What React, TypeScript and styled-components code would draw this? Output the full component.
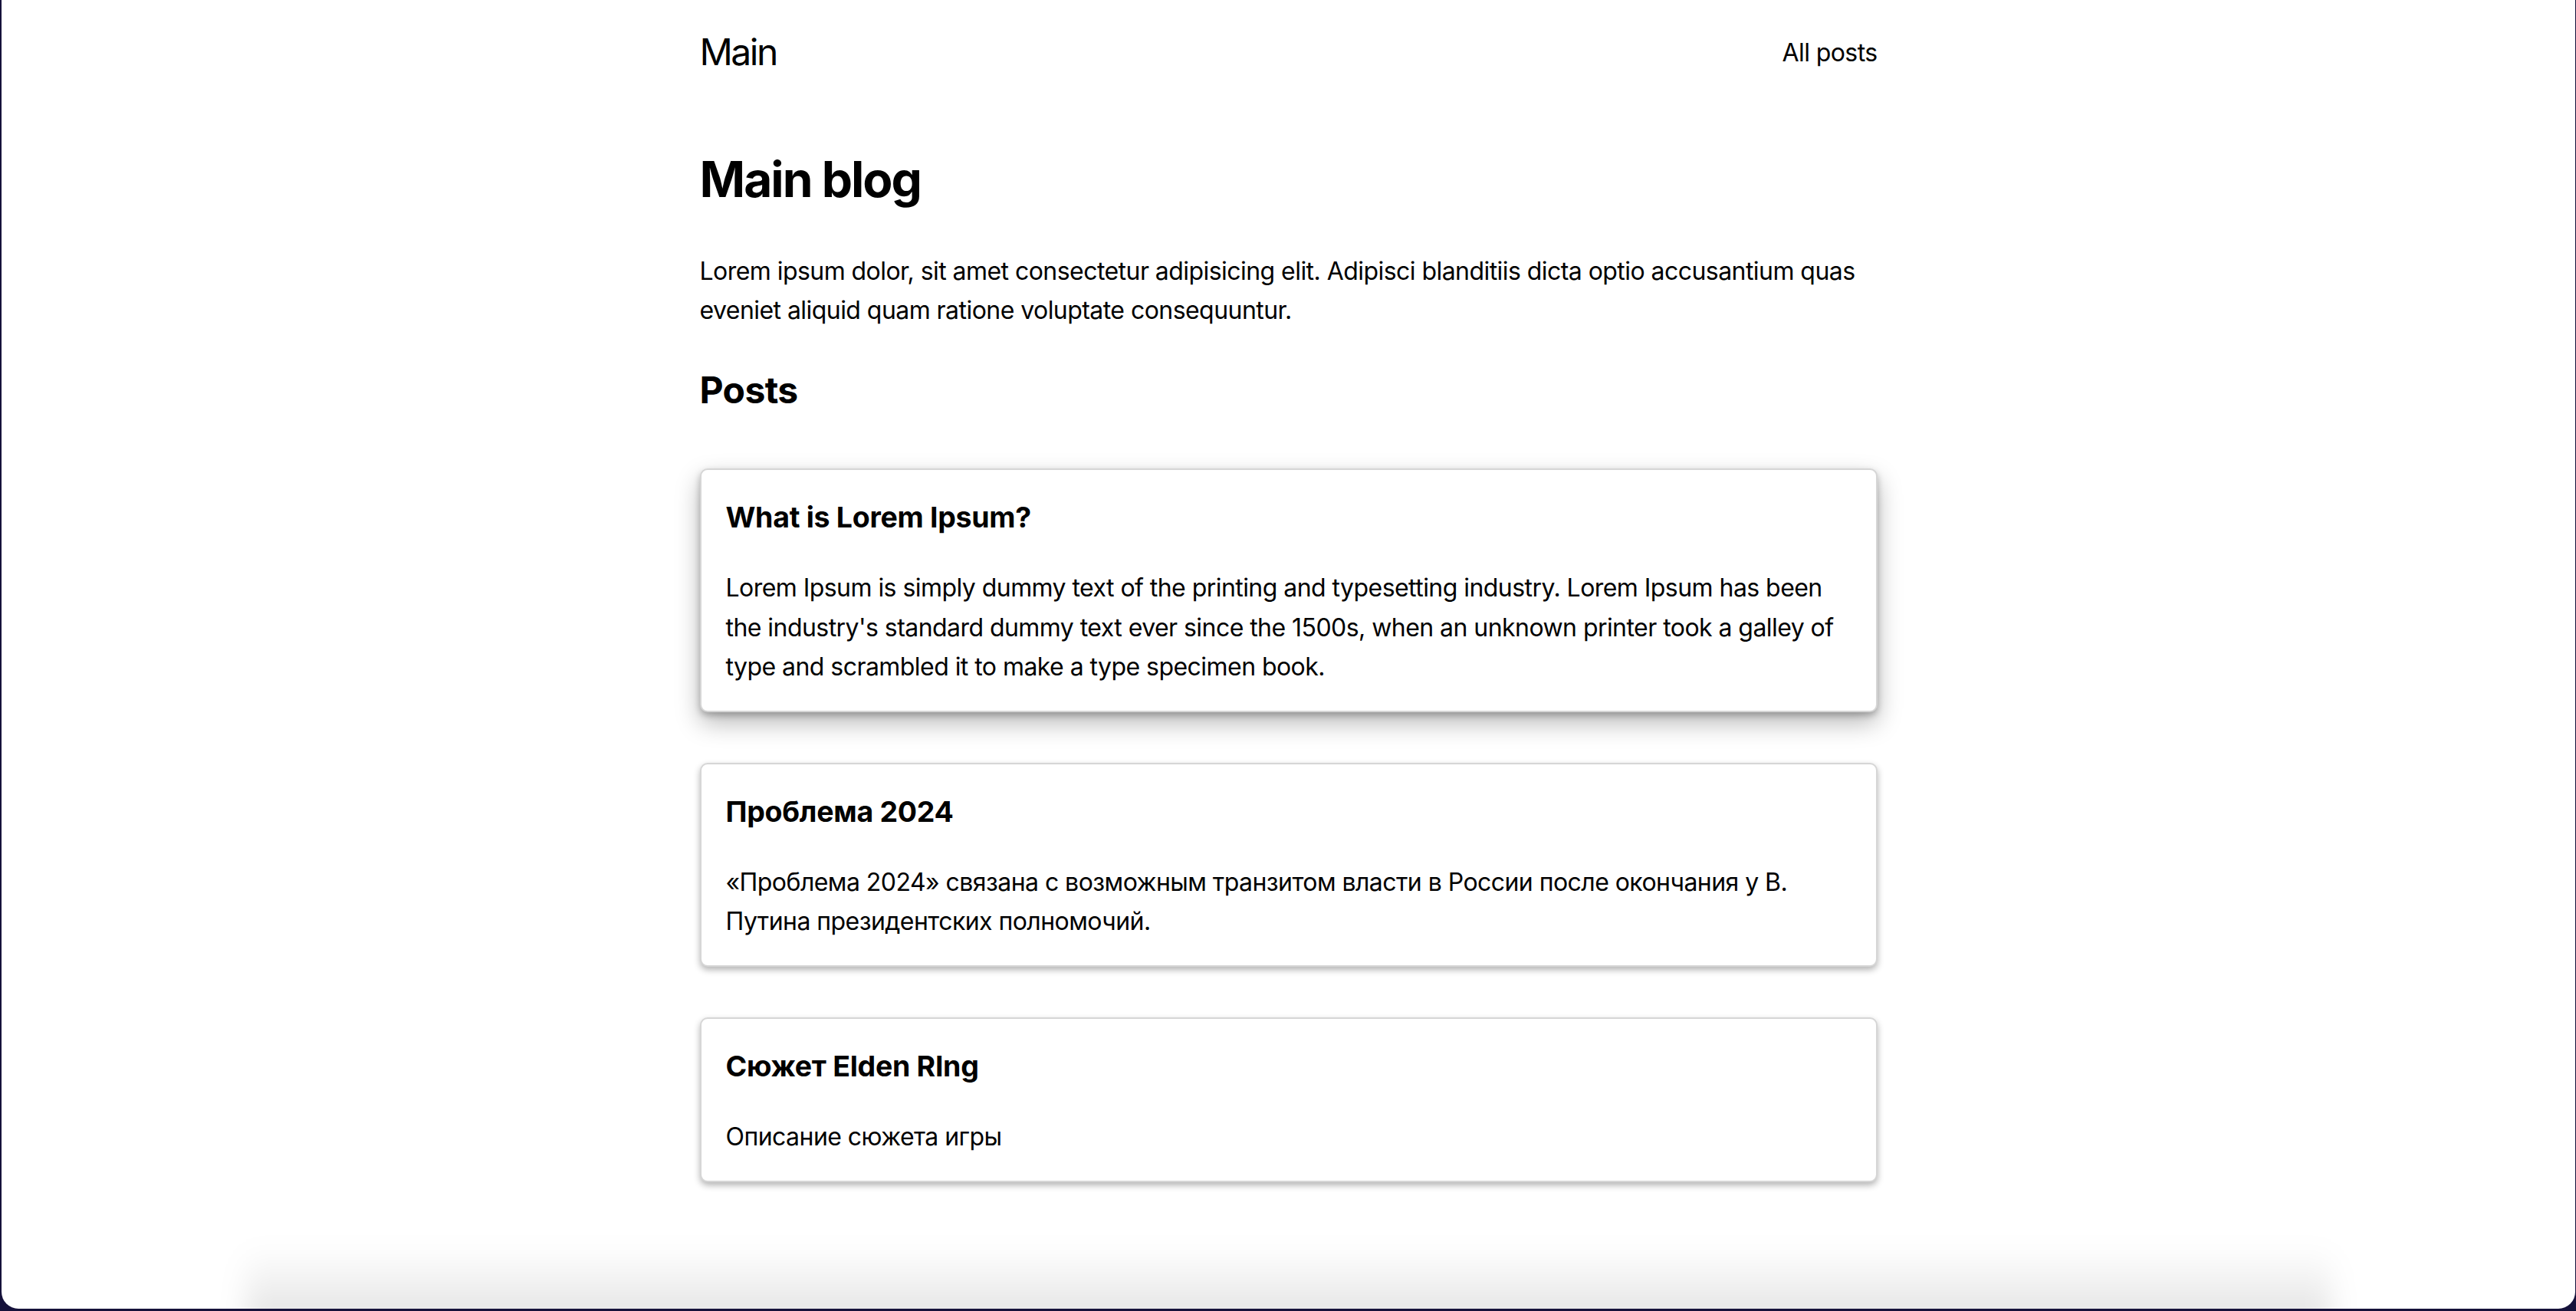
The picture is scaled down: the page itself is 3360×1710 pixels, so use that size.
import React from "react";
import styled, { createGlobalStyle } from "styled-components";

const GlobalStyle = createGlobalStyle`
  html, body {
    margin: 0;
    padding: 0;
    background: #15113a;
  }
  body {
    font-family: Inter, "Noto Sans", "Liberation Sans", "Noto Sans CJK SC", sans-serif;
    color: #000;
  }
  * { box-sizing: border-box; }
`;

const Window = styled.div`
  display: flex;
  flex-direction: column;
  height: 1707px;
  margin: 0 1px 0 2px;
  background: #ffffff;
  border-radius: 0 0 22px 22px;
  overflow: hidden;
`;

const Container = styled.div`
  width: 1536px;
  margin: 0 auto;
  line-height: 1.6;
`;

const Header = styled.header`
  display: flex;
  align-items: center;
  justify-content: space-between;
  padding-top: 30px;
`;

const Brand = styled.a`
  font-size: 48px;
  font-weight: 400;
  color: #000;
  text-decoration: none;
  letter-spacing: -2.5px;
`;

const NavLink = styled.a`
  font-size: 32px;
  font-weight: 400;
  color: #000;
  text-decoration: none;
  letter-spacing: -0.6px;
`;

const Title = styled.h1`
  font-size: 64px;
  font-weight: 700;
  margin: 76px 0 43px;
  letter-spacing: -2px;
`;

const Intro = styled.p`
  font-size: 32px;
  margin: 0 0 40px;
  letter-spacing: -0.55px;
`;

const SectionTitle = styled.h2`
  font-size: 48px;
  font-weight: 700;
  margin: 0 0 64px;
  letter-spacing: -0.6px;
`;

const PostList = styled.div`
  display: flex;
  flex-direction: column;
  gap: 66px;
`;

const Card = styled.article<{ $raised?: boolean }>`
  background: #fff;
  border: 2px solid #d6d6d6;
  border-radius: 10px;
  padding: 32px;
  box-shadow: ${(p) =>
    p.$raised
      ? "0 4px 8px rgba(0,0,0,0.25), 0 14px 32px rgba(0,0,0,0.28)"
      : "0 4px 8px rgba(0,0,0,0.3)"};
`;

const CardTitle = styled.h3`
  font-size: 37.5px;
  font-weight: 700;
  margin: 0 0 36px;
  letter-spacing: -0.3px;
`;

const CardText = styled.p`
  font-size: 32px;
  margin: 0;
  letter-spacing: -0.55px;
`;

const BottomShade = styled.div`
  margin-top: auto;
  align-self: center;
  width: 2720px;
  height: 110px;
  margin-bottom: -30px;
  background: linear-gradient(to bottom, rgba(0,0,0,0) 0%, rgba(0,0,0,0.13) 100%);
  filter: blur(18px);
`;

const posts = [
  {
    title: "What is Lorem Ipsum?",
    text: "Lorem Ipsum is simply dummy text of the printing and typesetting industry. Lorem Ipsum has been the industry's standard dummy text ever since the 1500s, when an unknown printer took a galley of type and scrambled it to make a type specimen book.",
    raised: true,
  },
  {
    title: "Проблема 2024",
    text: "«Проблема 2024» связана с возможным транзитом власти в России после окончания у В. Путина президентских полномочий.",
    raised: false,
  },
  {
    title: "Сюжет Elden RIng",
    text: "Описание сюжета игры",
    raised: false,
  },
];

export default function App() {
  return (
    <>
      <GlobalStyle />
      <Window>
        <Container>
          <Header>
            <Brand href="#">Main</Brand>
            <NavLink href="#">All posts</NavLink>
          </Header>
          <Title>Main blog</Title>
          <Intro>
            Lorem ipsum dolor, sit amet consectetur adipisicing elit. Adipisci blanditiis dicta optio
            accusantium quas eveniet aliquid quam ratione voluptate consequuntur.
          </Intro>
          <SectionTitle>Posts</SectionTitle>
          <PostList>
            {posts.map((p) => (
              <Card key={p.title} $raised={p.raised}>
                <CardTitle>{p.title}</CardTitle>
                <CardText>{p.text}</CardText>
              </Card>
            ))}
          </PostList>
        </Container>
        <BottomShade />
      </Window>
    </>
  );
}
